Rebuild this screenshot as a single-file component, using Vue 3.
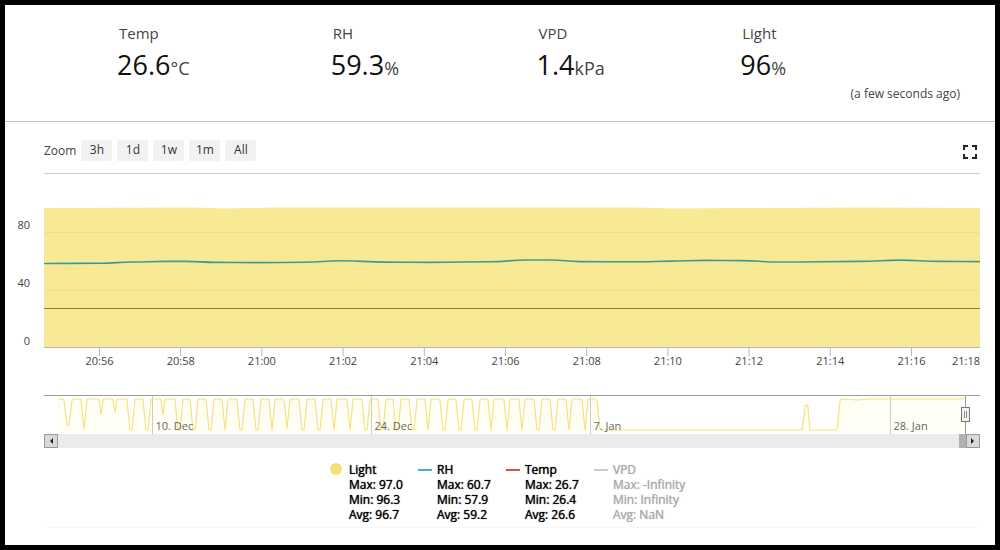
<script setup>
const readings = [
  { label: 'Temp', value: '26.6', unit: '°C' },
  { label: 'RH', value: '59.3', unit: '%' },
  { label: 'VPD', value: '1.4', unit: 'kPa' },
  { label: 'Light', value: '96', unit: '%' },
]
const ranges = ['3h', '1d', '1w', '1m', 'All']

const W = 936
const pct = (x) => `${(x / W) * 100}%`

// time axis
const times = ['20:56', '20:58', '21:00', '21:02', '21:04', '21:06', '21:08', '21:10', '21:12', '21:14', '21:16']
const ticks = times.map((text, i) => ({ text, x: pct(55.5 + i * 81.2) }))

// humidity curve, eased between samples
const rh = [
  [0, 89.5], [56, 89.2], [90, 88], [120, 87.4], [142, 87.4], [172, 88.4], [216, 88.6], [259, 88.3], [298, 86.7],
  [341, 88.1], [386, 88.4], [446, 87.7], [483, 86], [507, 86], [536, 87.6], [596, 87.8], [626, 87.1],
  [661, 86.4], [696, 86.6], [736, 88], [816, 87.4], [856, 86.1], [896, 87.4], [936, 87.6],
]
const smooth = (p) => p.slice(1).reduce((d, [x, y], i) => {
  const [px, py] = p[i]
  const m = (px + x) / 2
  return `${d} C${m},${py} ${m},${y} ${x},${y}`
}, `M${p[0][0]},${p[0][1]}`)
const rhPath = smooth(rh)

// night dips of the light series: centre, depth, flat bottom
const dips = [
  [24, 29, 1], [40, 33, 0], [57, 18, 0], [71, 16, 0], [87, 34, 1], [103, 34, 1], [119, 19, 0], [135, 34, 1],
  [150, 34, 1], [166, 34, 1], [181, 34, 0], [197, 34, 1], [213, 34, 1], [228, 34, 0], [243, 32, 0], [259, 34, 1],
  [275, 34, 1], [290, 34, 0], [306, 34, 0], [322, 34, 1], [338, 34, 1], [353, 34, 1], [369, 34, 1], [384, 34, 0],
  [400, 34, 1], [416, 34, 1], [432, 34, 1], [447, 34, 0], [463, 34, 0], [478, 34, 0], [494, 34, 1], [510, 34, 1],
  [525, 34, 0], [541, 34, 0],
]
const navPath = dips.reduce((d, [x, depth, flat]) => {
  const reach = depth < 25 ? 3 : 4
  return `${d} L${x - reach - flat},4 L${x - reach - flat + 1},5 L${x - flat},${depth + 1} L${x + flat},${depth + 1} L${x + reach + flat - 1},5 L${x + reach + flat},4`
}, 'M14,4') + ' L551,4 L553,6 L556,34 L558,35 L758,35 L761,12 L762,10 L763,10 L764,12 L766,35 L793,35 L796,6 L797,4 L814,5 L826,4 L915,4 L922,3'
const navFill = `${navPath} L922,38 L14,38 Z`
const dates = [
  { text: '10. Dec', x: 108.5 },
  { text: '24. Dec', x: 327.5 },
  { text: '7. Jan', x: 546.5 },
  { text: '28. Jan', x: 846.5 },
]

const legend = [
  { name: 'Light', kind: 'dot', stats: ['Max: 97.0', 'Min: 96.3', 'Avg: 96.7'] },
  { name: 'RH', kind: 'blue', stats: ['Max: 60.7', 'Min: 57.9', 'Avg: 59.2'] },
  { name: 'Temp', kind: 'red', stats: ['Max: 26.7', 'Min: 26.4', 'Avg: 26.6'] },
  { name: 'VPD', kind: 'off', stats: ['Max: -Infinity', 'Min: Infinity', 'Avg: NaN'] },
]
</script>

<template>
  <main class="panel">
    <header class="summary">
      <div class="readings">
        <div v-for="r in readings" :key="r.label" class="reading">
          <div class="name">{{ r.label }}</div>
          <div class="value">{{ r.value }}<span class="unit">{{ r.unit }}</span></div>
        </div>
      </div>
      <div class="ago">(a few seconds ago)</div>
    </header>

    <section class="chart">
      <div class="toolbar">
        <span class="zoom">Zoom</span>
        <button v-for="r in ranges" :key="r" type="button" class="range">{{ r }}</button>
        <button type="button" class="full" aria-label="Full screen">
          <svg width="24" height="24" viewBox="0 0 24 24">
            <path d="M5,5H10V7H7V10H5V5M14,5H19V10H17V7H14V5M17,14H19V19H14V17H17V14M10,17V19H5V14H7V17H10Z" fill="#222" />
          </svg>
        </button>
      </div>

      <div class="plot">
        <div class="scale"><span>80</span><span>40</span><span>0</span></div>
        <svg class="graph" width="100%" height="200">
          <svg width="100%" height="200" viewBox="0 0 936 200" preserveAspectRatio="none">
            <path d="M0,34 L150,33.5 L180,34.5 L230,33.5 L590,33.5 L630,34.5 L700,34 L820,33.5 L936,34 V173 H0 Z" fill="#f8ea95" />
            <path d="M0,58.5 H936 M0,116.5 H936" stroke="#efdf8c" />
            <path :d="rhPath" fill="none" stroke="#3c9c95" stroke-width="1.6" />
            <path d="M0,134.5 H936" stroke="#a96d36" />
            <path d="M0,173.5 H936" stroke="#b3b3bb" />
          </svg>
          <g v-for="t in ticks" :key="t.text">
            <line :x1="t.x" :x2="t.x" y1="174" y2="182" stroke="#b3b8cc" />
            <text :x="t.x" y="191" text-anchor="middle">{{ t.text }}</text>
          </g>
          <text x="100%" y="191" text-anchor="end">21:18</text>
        </svg>
      </div>

      <div class="navigator">
        <svg class="graph" width="100%" height="39">
          <svg width="100%" height="39" viewBox="0 0 936 39" preserveAspectRatio="none">
            <path :d="navFill" fill="#fffef4" />
            <path d="M108.5,1 V39 M327.5,1 V39 M546.5,1 V39 M846.5,1 V39" stroke="#cccccc" />
            <path :d="navPath" fill="none" stroke="#f6e27c" stroke-width="1.2" stroke-linejoin="round" />
            <path d="M0,0.5 H936" stroke="#9c9ca6" />
            <path d="M921.5,1 V39" stroke="#999" />
          </svg>
          <text v-for="d in dates" :key="d.text" class="date" :x="pct(d.x + 3)" y="35">{{ d.text }}</text>
          <svg :x="pct(917)" y="12" width="9" height="16">
            <rect x="0.5" y="0.5" width="8" height="14" fill="#f2f2f2" stroke="#777" />
            <path d="M3.5,4 V11 M5.5,4 V11" stroke="#888" />
          </svg>
        </svg>
        <div class="scroll">
          <button type="button" aria-label="Scroll left"><svg width="6" height="6" viewBox="0 0 6 6"><path d="M5,0 V6 L2,3 Z" fill="#222" /></svg></button>
          <span class="track"><span class="thumb"></span></span>
          <button type="button" aria-label="Scroll right"><svg width="6" height="6" viewBox="0 0 6 6"><path d="M1,0 V6 L4,3 Z" fill="#222" /></svg></button>
        </div>
      </div>

      <div class="legend">
        <button v-for="l in legend" :key="l.name" type="button" class="item" :class="l.kind">
          <span class="mark"></span>
          <span class="lines">
            <span>{{ l.name }}</span>
            <span v-for="s in l.stats" :key="s">{{ s }}</span>
          </span>
        </button>
      </div>
    </section>
  </main>
</template>

<style>
body { background: #000; }
</style>

<style scoped>
.panel {
  box-sizing: border-box;
  min-height: 100vh;
  border: 5px solid #000;
  background: #fff;
  color: #444;
  font-family: "Open Sans", "Noto Sans", sans-serif;
}
button {
  font: inherit;
  color: inherit;
  border: 0;
  padding: 0;
  background: none;
}
.summary {
  border-bottom: 1px solid #c4c4c4;
  padding: 16px 35px 19px 112px;
}
.readings {
  display: grid;
  grid-template-columns: 214fr 206fr 204fr 220fr;
}
.name { font-size: 15px; line-height: 24px; padding-left: 2px; }
.value { font-size: 27px; line-height: 40px; color: #111; }
.unit { font-size: 18px; line-height: 18px; color: #444; }
.ago { text-align: right; font-size: 12px; line-height: 17px; }
.chart { padding: 18px 15px 0 39px; }
.toolbar {
  display: flex;
  align-items: flex-start;
  gap: 5px;
  height: 33px;
  border-bottom: 1px solid #cccccc;
  font-size: 12px;
  line-height: 20px;
}
.zoom { line-height: 22px; }
.range { width: 31px; height: 21px; background: #f2f2f2; border-radius: 1px; line-height: 19px; padding-bottom: 2px; color: #333; }
.full { margin-left: auto; margin-right: -2px; height: 24px; }
svg { display: block; }
.plot { display: grid; grid-template-columns: 25px 1fr; margin-left: -39px; column-gap: 14px; }
.scale {
  display: flex;
  flex-direction: column;
  justify-content: space-between;
  height: 132px;
  padding-top: 43px;
  text-align: right;
  font-size: 11px;
  line-height: 16px;
}
.graph { overflow: visible; }
.graph text { font-size: 11px; fill: #444; }
.graph .date { fill: #666; }
.navigator { margin-top: 21px; }
.scroll { display: flex; height: 14px; }
.scroll button {
  box-sizing: border-box;
  width: 14px;
  display: grid;
  place-items: center;
  background: #d9d9d9;
  border: 1px solid #999;
}
.track { flex: 1; display: flex; justify-content: flex-end; background: #ebebeb; }
.thumb { width: 7px; background: #b0b0b0; }
.legend {
  display: grid;
  grid-template-columns: repeat(3, 88px) 100px;
  justify-content: center;
  padding: 14px 0 5px;
  border-bottom: 1px solid #f7f7f7;
}
.item {
  display: grid;
  grid-template-columns: 14px 1fr;
  column-gap: 5px;
  text-align: left;
  font-size: 12px;
  line-height: 15px;
  color: #000;
  text-shadow: 0 0 1px currentColor;
}
.lines { display: flex; flex-direction: column; }
.mark { height: 2px; margin-top: 7px; background: #45afd6; }
.dot .mark { width: 12px; height: 12px; margin-top: 1px; border-radius: 50%; background: #f5e171; }
.red .mark { background: #d94f43; }
.off { color: #aaa; }
.off .mark { background: #ccc; }
</style>
